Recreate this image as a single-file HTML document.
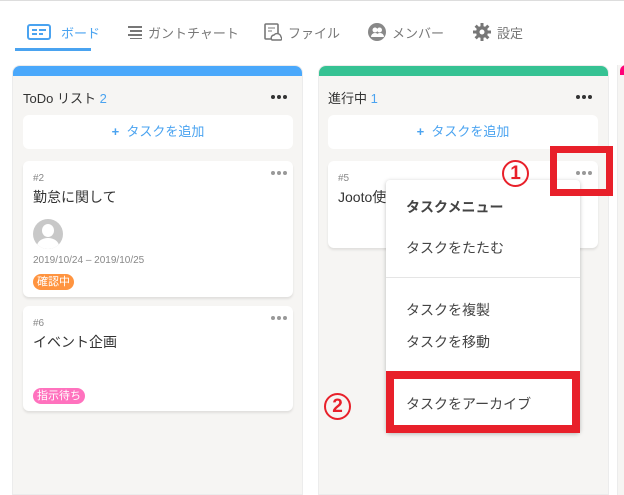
<!DOCTYPE html>
<html><head><meta charset="utf-8"><style>
*{margin:0;padding:0;box-sizing:border-box}
body{width:624px;height:486px;overflow:hidden;background:#fff;font-family:"Liberation Sans","Noto Sans CJK JP",sans-serif;position:relative;color:#333}
.a{position:absolute}
.tab{position:absolute;top:23px;font-size:13px;color:#777;display:flex;align-items:center;gap:6px;height:18px}
.col{position:absolute;top:65px;width:291px;height:430px;background:#f6f5f3;border-radius:8px 8px 0 0;overflow:hidden;border:1px solid #ececec}
.bar{height:10px}
.card{position:absolute;background:#fff;border-radius:6px;box-shadow:0 2px 2px #e0dfdd}
.dots{position:absolute;width:16px;height:4px;display:flex;justify-content:space-between}
.dots i{width:4px;height:4px;border-radius:50%;background:#999;display:block}
.dots.k i{background:#333}
.tag{position:absolute;font-size:11px;color:#fff;border-radius:8px;padding:0 4px;height:16px;line-height:16px}
.mi{position:absolute;left:20px;font-size:14px;color:#444}
.circ{position:absolute;width:27px;height:27px;border:2px solid #e8202a;border-radius:50%;color:#e8202a;font-weight:bold;font-size:19px;text-align:center;line-height:23px}
</style></head><body>
<div class="a" style="left:0;top:0;width:624px;height:1px;background:#ddd"></div>
<div class="tab" style="left:27px;color:#4aa3f0"><svg width="24" height="16"><rect x="1" y="1" width="22" height="14" rx="2" fill="none" stroke="#4aa3f0" stroke-width="2"/><rect x="5" y="5" width="5" height="2" fill="#4aa3f0"/><rect x="5" y="9" width="5" height="2" fill="#4aa3f0"/><rect x="12" y="5" width="7" height="2" fill="#4aa3f0"/><rect x="12" y="9" width="4" height="2" fill="#4aa3f0"/></svg><span style="margin-left:4px">ボード</span></div>
<div class="a" style="left:15px;top:48px;width:76px;height:3px;background:#4aa3f0"></div>
<div class="tab" style="left:128px"><svg width="14" height="14"><rect y="1" width="14" height="2" fill="#777"/><rect x="2" y="5" width="12" height="2" fill="#777"/><rect y="9" width="14" height="2" fill="#777"/><rect x="2" y="13" width="12" height="1.5" fill="#777"/></svg>ガントチャート</div>
<div class="tab" style="left:264px"><svg width="18" height="18"><rect x="1" y="1" width="13" height="15" rx="1" fill="none" stroke="#777" stroke-width="1.6"/><path d="M4 5h7M4 8h4" stroke="#777"/><path d="M8 17a3 3 0 0 1 2-5 4 4 0 0 1 7 2 2 2 0 0 1 0 3z" fill="#fff" stroke="#777" stroke-width="1.4"/></svg>ファイル</div>
<div class="tab" style="left:368px"><svg width="18" height="18"><circle cx="9" cy="9" r="9" fill="#888"/><circle cx="7" cy="7" r="2.5" fill="#fff"/><circle cx="11.5" cy="7" r="2.5" fill="#fff"/><path d="M3 14a4 4 0 0 1 8 0zM8 14a4 4 0 0 1 8 0z" fill="#fff"/></svg>メンバー</div>
<div class="tab" style="left:473px"><svg width="18" height="18" viewBox="0 0 18 18"><g fill="#777"><circle cx="9" cy="9" r="6"/><rect x="7.5" y="0" width="3" height="18"/><rect x="0" y="7.5" width="18" height="3"/><rect x="7.5" y="0" width="3" height="18" transform="rotate(45 9 9)"/><rect x="7.5" y="0" width="3" height="18" transform="rotate(-45 9 9)"/></g><circle cx="9" cy="9" r="2.5" fill="#fff"/></svg>設定</div>

<div class="col" style="left:12px"><div class="bar" style="background:#4aa8fb"></div></div>
<div class="col" style="left:318px"><div class="bar" style="background:#36c293"></div></div>
<div class="a" style="left:617px;top:65px;width:10px;height:430px;background:#f6f5f3;border-left:1px solid #ececec"></div>
<div class="a" style="left:620px;top:65px;width:6px;height:10px;background:#f07;border-radius:6px 0 0 0"></div>

<div class="a" style="left:23px;top:88px;font-size:13px">ToDo リスト <span style="color:#4aa3f0">2</span></div>
<div class="dots k" style="left:271px;top:95px"><i></i><i></i><i></i></div>
<div class="a" style="left:328px;top:88px;font-size:13px">進行中 <span style="color:#4aa3f0">1</span></div>
<div class="dots k" style="left:576px;top:95px"><i></i><i></i><i></i></div>

<div class="card" style="left:23px;top:115px;width:270px;height:34px;box-shadow:none;text-align:center;line-height:34px;font-size:13px;color:#4aa3f0"><b>+</b>&nbsp; タスクを追加</div>
<div class="card" style="left:328px;top:115px;width:270px;height:34px;box-shadow:none;text-align:center;line-height:34px;font-size:13px;color:#4aa3f0"><b>+</b>&nbsp; タスクを追加</div>

<div class="card" style="left:23px;top:161px;width:270px;height:136px">
<div class="dots" style="left:248px;top:10px"><i></i><i></i><i></i></div>
<div class="a" style="left:10px;top:12px;font-size:10px;color:#888">#2</div>
<div class="a" style="left:10px;top:26px;font-size:14px">勤怠に関して</div>
<div class="a" style="left:10px;top:58px;width:30px;height:30px;border-radius:50%;background:#c8c8c8;overflow:hidden"><div class="a" style="left:9px;top:5px;width:12px;height:13px;border-radius:50%;background:#fff"></div><div class="a" style="left:4px;top:19px;width:22px;height:16px;border-radius:50%;background:#fff"></div></div>
<div class="a" style="left:10px;top:94px;font-size:10px;color:#888">2019/10/24 – 2019/10/25</div>
<div class="tag" style="left:10px;top:113px;background:#ff9440">確認中</div>
</div>
<div class="card" style="left:23px;top:306px;width:270px;height:105px">
<div class="dots" style="left:248px;top:10px"><i></i><i></i><i></i></div>
<div class="a" style="left:10px;top:12px;font-size:10px;color:#888">#6</div>
<div class="a" style="left:10px;top:26px;font-size:14px">イベント企画</div>
<div class="tag" style="left:10px;top:82px;background:#ff72be">指示待ち</div>
</div>
<div class="card" style="left:328px;top:161px;width:270px;height:87px">
<div class="dots" style="left:248px;top:10px"><i></i><i></i><i></i></div>
<div class="a" style="left:10px;top:12px;font-size:10px;color:#888">#5</div>
<div class="a" style="left:10px;top:26px;font-size:14px">Jooto使い方</div>
</div>

<div class="a" style="left:386px;top:180px;width:194px;height:253px;background:#fff;border-radius:4px;box-shadow:0 1px 4px rgba(0,0,0,.25)">
<div class="mi" style="top:17px;font-weight:bold">タスクメニュー</div>
<div class="mi" style="top:58px">タスクをたたむ</div>
<div class="a" style="left:0;top:97px;width:194px;height:1px;background:#e5e5e5"></div>
<div class="mi" style="top:120px">タスクを複製</div>
<div class="mi" style="top:152px">タスクを移動</div>
<div class="mi" style="top:214px">タスクをアーカイブ</div>
</div>
<div class="a" style="left:550px;top:146px;width:63px;height:50px;border:7px solid #e8202a"></div>
<div class="a" style="left:386px;top:371px;width:194px;height:62px;border:8px solid #e8202a"></div>
<div class="circ" style="left:502px;top:160px">1</div>
<div class="circ" style="left:324px;top:393px">2</div>
</body></html>
